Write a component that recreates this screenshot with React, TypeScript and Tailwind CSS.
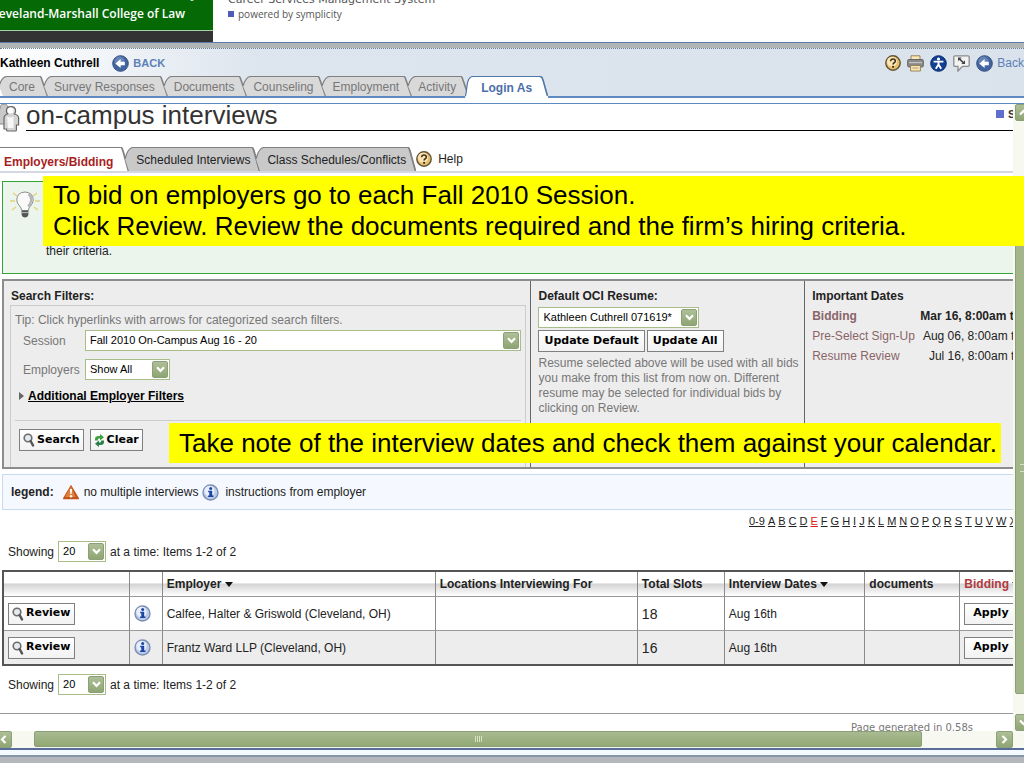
import { ReactNode } from "react";
import clsx from "clsx";

interface SelectBoxProps {
  id: string;
  label: string;
  value: string;
  className?: string;
}

const SelectBox = ({ id, label, value, className }: SelectBoxProps) => (
  <span className={clsx("relative block", className)}>
    <select
      id={id}
      aria-label={label}
      defaultValue={value}
      className="block h-[21px] w-full appearance-none border border-[#a9bd88] bg-white pl-1 pr-5 text-[11px] text-black"
    >
      <option>{value}</option>
    </select>
    <span className="pointer-events-none absolute top-0.5 right-0.5 grid h-[17px] w-4 place-items-center rounded-xs border border-[#8ba077] bg-linear-to-b from-[#aebf98] to-[#8fa573]">
      <svg width="9" height="7" viewBox="0 0 9 7">
        <path d="M1 1.2 4.5 4.8 8 1.2" fill="none" stroke="#fff" strokeWidth="2.2" />
      </svg>
    </span>
  </span>
);

const FormButton = ({ children, className }: { children: ReactNode; className?: string }) => (
  <button
    type="button"
    className={clsx(
      "inline-flex h-[22px] items-center gap-0.5 border border-[#808080] bg-linear-to-b from-white to-[#f2f2f2] font-['DejaVu_Sans',sans-serif] text-[11px] font-bold whitespace-nowrap text-black",
      className ?? "px-[3px]",
    )}
  >
    {children}
  </button>
);

const Magnifier = () => (
  <svg width="12" height="14" viewBox="0 0 12 14">
    <circle cx="5" cy="5" r="3.8" fill="#e3eaf0" stroke="#6d6d6d" strokeWidth="1.6" />
    <path d="M7.6 8 10 12.4" stroke="#555" strokeWidth="2.4" strokeLinecap="round" />
  </svg>
);

const Recycle = () => (
  <svg width="11" height="13" viewBox="0 0 11 13">
    <path d="M1 6.500V5Q1 2 4.500 2H6V0L10 3.200 6 6.400V4.600H4.800Q3.800 4.600 3.800 6.500z" fill="#3fa03f" />
    <path d="M10 6.500V8Q10 11 6.500 11H5v2L1 9.800 5 6.600v1.800h1.200Q7.200 8.400 7.200 6.500z" fill="#2b7f4a" />
  </svg>
);

const HelpIcon = () => (
  <svg width="16" height="16" viewBox="0 0 16 16">
    <circle cx="8" cy="8" r="7.2" fill="#e8bf6c" stroke="#5f5236" strokeWidth="1.4" />
    <circle cx="7" cy="6.8" r="5" fill="#fbe6b4" />
    <path d="M5.6 6.2Q5.8 4 8 4t2.3 1.9Q10.3 7.2 8.9 8q-.8.5-.8 1.6" fill="none" stroke="#3c321e" strokeWidth="1.6" />
    <circle cx="8.1" cy="11.8" r="1.1" fill="#3c321e" />
  </svg>
);

const InfoIcon = () => (
  <svg width="17" height="17" viewBox="0 0 17 17">
    <circle cx="8.5" cy="8.5" r="7.5" fill="#bccbe6" stroke="#7c8fb4" strokeWidth="1.4" />
    <circle cx="7.5" cy="7" r="5.2" fill="#e8effa" />
    <circle cx="8.7" cy="4.4" r="1.5" fill="#1c43a6" />
    <path d="M6.2 6.8h4v4.800h1.200v1.500H6.100v-1.500h1.200V8.200H6.200z" fill="#1c43a6" />
  </svg>
);

const BackIcon = () => (
  <svg width="17" height="17" viewBox="0 0 17 17">
    <circle cx="8.5" cy="8.5" r="7.8" fill="#43659f" stroke="#35507f" />
    <circle cx="7.5" cy="6.500" r="5" fill="#6484b8" />
    <path d="M3.4 8.5 8.6 4v2.8h4.2v3.4H8.6V13z" fill="#fff" />
  </svg>
);

const PrintIcon = () => (
  <svg width="17" height="17" viewBox="0 0 17 17">
    <path d="M4 .8h9V6H4z" fill="#fbe6b4" stroke="#8c7a50" strokeWidth=".9" />
    <rect x=".7" y="4.500" width="15.6" height="7.400" rx="1" fill="#8a8a8a" stroke="#666" />
    <path d="M2 7.6h13" stroke="#c4c4c4" strokeWidth="1.2" />
    <path d="M3.6 10.500h9.8V16H3.6z" fill="#fbe6b4" stroke="#8c7a50" strokeWidth=".9" />
    <path d="M5.4 13h6" stroke="#a79972" />
  </svg>
);

const AccessIcon = () => (
  <svg width="17" height="17" viewBox="0 0 17 17">
    <circle cx="8.5" cy="8.5" r="7.8" fill="#123e94" stroke="#0c2d70" />
    <circle cx="8.5" cy="4" r="1.6" fill="#fff" />
    <path d="M3.6 6.6h9.8M8.5 6.4v3.4M8.5 9.4 5.8 13.8M8.5 9.4l2.7 4.4" stroke="#fff" strokeWidth="1.9" />
  </svg>
);

const BubbleIcon = () => (
  <svg width="17" height="17" viewBox="0 0 17 17">
    <path d="M2 .8h13q1.200 0 1.200 1.200v8q0 1.400-1.200 1.400H9.500L5 16v-4.600H2Q.8 11.400.8 10V2Q.8.8 2 .8z" fill="#f2f2f2" stroke="#8b8b8b" strokeWidth="1.3" />
    <path d="M6 3.4 10.6 8" stroke="#444" strokeWidth="1.6" />
    <path d="M5 2.600h3.600L5 6.200zM12 8.900H8.400L12 5.300z" fill="#444" />
  </svg>
);

const WarningIcon = () => (
  <svg width="18" height="16" viewBox="0 0 18 16">
    <path d="M9 .8 17 14.2q.4 1-.8 1H1.8q-1.2 0-.8-1z" fill="#c4551a" />
    <path d="M9 2.5 13.6 13H3z" fill="#e3803d" />
    <path d="M7.800 5h2.400L9.600 10H8.400z" fill="#fff" />
    <circle cx="9" cy="12.2" r="1.2" fill="#fff" />
  </svg>
);

const PeopleIcon = () => (
  <svg width="20" height="28" viewBox="0 0 20 28">
    <path d="M-4 20V9Q-4 6 0 5 0 0 4 0t4 5q3 1 3 4v11z" fill="#c9c9c9" stroke="#888" />
    <path d="M4 25V14q0-3 3.600-4Q6.400 8.600 6.400 7 6.400 2.700 11 2.700T15.600 7q0 1.600-1.200 3 4.200 1 4.200 4v7h-2.200v5q0 1-1 1H7.600q-1 0-1-1v-1z" fill="#d4d4d4" stroke="#666" strokeWidth="1.2" />
    <circle cx="10.500" cy="6.500" r="3" fill="#fff" />
    <path d="M7 12.500q3.500 2 6.500 0V24H8z" fill="#fff" opacity=".8" />
  </svg>
);

const BulbIcon = () => (
  <svg width="32" height="30" viewBox="0 0 32 30">
    <path d="M4 3l4 3M28 3l-4 3M1 11h5M31 11h-5M3 20l4-3M29 20l-4-3" stroke="#e5d17c" strokeWidth="1.3" />
    <path d="M16 2Q7.800 2.500 7.800 10q0 3.400 2.800 6 1.800 1.800 2 4.500h6.800q.2-2.700 2-4.500 2.800-2.600 2.800-6 0-7.500-8.200-8z" fill="#fafafa" stroke="#8e8e8e" />
    <path d="M19.500 4q3.200 2.300 2.800 6.200-.4 3.200-3.200 6.300" fill="none" stroke="#b5b5b5" strokeWidth="2.4" />
    <path d="M12.600 20.500h6.800v4.500q-1 2.500-3.400 2.500t-3.400-2.500z" fill="#555" />
    <path d="M12.600 22.600h6.800" stroke="#bbb" />
  </svg>
);

interface TabProps {
  label: string;
  active?: boolean;
}

// Tabs of the outer record view
const RecordTab = ({ label, active }: TabProps) => {
  const fill = active ? "#ffffff" : "#d9d9d9";
  const stroke = active ? "#4d76aa" : "#808080";
  return (
    <div className={clsx("-ml-1 flex items-end", active && "relative -mb-0.5")}>
      <svg width="8" height={active ? 22 : 20} viewBox={active ? "0 0 8 22" : "0 0 8 20"} className="shrink-0">
        <path d={active ? "M0 22Q1.500 16 2 10 3 .5 8 .5V22z" : "M0 10Q3 .5 8 .5V20H4z"} fill={fill} />
        <path d={active ? "M.5 20Q1.500 15 2 10 3 .5 8 .5" : "M0 10Q3 .5 8 .5"} fill="none" stroke={stroke} strokeWidth="1.2" />
      </svg>
      <button
        type="button"
        className={clsx(
          "border-t whitespace-nowrap",
          active
            ? "h-[22px] border-[#4d76aa] bg-white px-2 text-xs font-bold text-[#4a70a8]"
            : "h-5 border-[#808080] bg-[#d9d9d9] pr-[5px] pl-0.5 text-xs text-[#777777]",
        )}
      >
        {label}
      </button>
      <svg width="8" height={active ? 22 : 20} viewBox={active ? "0 0 8 22" : "0 0 8 20"} className="shrink-0">
        <path d={active ? "M0 0Q2 0 3 3L8 20V22H0z" : "M0 0Q1 0 2 3L8 20H0z"} fill={fill} />
        <path d={active ? "M0 .5Q2 .5 3 4L7.500 20" : "M0 .5Q1 .5 2 4L7.500 20"} fill="none" stroke={stroke} strokeWidth="1.6" />
      </svg>
    </div>
  );
};

// Tabs of the embedded student page
const PageTab = ({ label, active }: TabProps) => {
  const fill = active ? "#ffffff" : "#c9c9c9";
  return (
    <div className={clsx("flex", !active && "-ml-1")}>
      {!active && (
        <svg width="8" height="24" viewBox="0 0 8 24" className="shrink-0">
          <path d="M0 12Q3 .5 8 .5V24H4z" fill={fill} />
          <path d="M0 12Q3 .5 8 .5" fill="none" stroke="#808080" strokeWidth="1.2" />
        </svg>
      )}
      <button
        type="button"
        className={clsx(
          "h-6 border-t border-[#808080] text-xs whitespace-nowrap",
          active ? "bg-white pt-1 pr-2 pl-1 font-bold text-[#a81e22]" : "bg-[#c9c9c9] pr-0.5 pl-[3px] text-[#222222]",
        )}
      >
        {label}
      </button>
      <svg width="8" height="24" viewBox="0 0 8 24" className="shrink-0">
        <path d="M0 0Q1 0 2 3L8 24H0z" fill={fill} />
        <path d="M0 .5Q1 .5 2 4L7.500 24" fill="none" stroke="#808080" strokeWidth="1.8" />
      </svg>
    </div>
  );
};

const Showing = ({ id }: { id: string }) => (
  <div className="flex items-center gap-1 pl-2 text-xs text-[#222222]">
    <label htmlFor={id}>Showing</label>
    <SelectBox id={id} label="Items per page" value="20" className="w-12" />
    <span>at a time: Items 1-2 of 2</span>
  </div>
);

const ScrollButton = ({ path, label }: { path: string; label: string }) => (
  <button
    type="button"
    aria-label={label}
    className="grid size-[17px] shrink-0 place-items-center rounded-xs border border-[#8ba077] bg-linear-to-b from-[#aebf98] to-[#8fa573]"
  >
    <svg width="9" height="9" viewBox="0 0 9 9">
      <path d={path} fill="none" stroke="#fff" strokeWidth="2.2" />
    </svg>
  </button>
);

const recordTabs = ["Core", "Survey Responses", "Documents", "Counseling", "Employment", "Activity"];

const letters = ["0-9", ..."ABCDEFGHIJKLMNOPQRSTUVWX"];

const dates = [
  { name: "Bidding", range: "Mar 16, 8:00am to", bold: true },
  { name: "Pre-Select Sign-Up", range: "Aug 06, 8:00am to", bold: false },
  { name: "Resume Review", range: "Jul 16, 8:00am to", bold: false },
];

const employers = [
  { name: "Calfee, Halter & Griswold (Cleveland, OH)", slots: 18, date: "Aug 16th" },
  { name: "Frantz Ward LLP (Cleveland, OH)", slots: 16, date: "Aug 16th" },
];

const headCell = "border-l border-[#8a8a8a] pl-1 text-left whitespace-nowrap overflow-hidden";
const bodyCell = "border-l border-[#8a8a8a] pl-1 overflow-hidden whitespace-nowrap";

const Header = () => (
  <header className="flex h-[42px] overflow-hidden bg-white">
    <div className="w-[213px] shrink-0 bg-[#333333]">
      <div className="flex h-[31px] flex-col items-end justify-end overflow-hidden border-b border-[#a5cfa5] bg-[#056a05] pr-4 font-['Open_Sans',sans-serif]">
        <span className="mb-1 text-xs leading-4 font-bold whitespace-nowrap text-[#c8e0c8]">Cleveland State University</span>
        <span className="pr-3 pb-2 text-xs leading-4 font-semibold whitespace-nowrap text-white">
          Cleveland-Marshall College of Law
        </span>
      </div>
    </div>
    <div className="-mt-2 flex flex-col pl-[15px] text-[#555555]">
      <span className="font-['DejaVu_Sans',sans-serif] text-[11px] leading-4 whitespace-nowrap">Career Services Management System</span>
      <span className="flex items-center gap-1 font-['Open_Sans',sans-serif] text-[10px] leading-3">
        <i className="size-1.5 bg-[#4c5cb8]" />
        powered by symplicity
      </span>
    </div>
  </header>
);

const RecordBar = () => (
  <div className="border-t border-[#5a7ba6]">
    <div className="h-[5px] bg-[#b0b5b5]" />
    <div className="border-t border-dotted border-[#6d7f99] bg-linear-to-r from-white via-[#dde5ee] via-25% to-[#dae2eb]">
      <div className="flex h-7 items-center justify-between">
        <div className="flex items-center gap-[13px]">
          <h2 className="text-xs font-bold text-black">Kathleen Cuthrell</h2>
          <a href="#back" className="flex items-center gap-1 text-[11px] font-bold text-[#5b80b5]">
            <BackIcon />
            BACK
          </a>
        </div>
        <div className="flex items-center gap-1.5 text-xs text-[#5b80b5]">
          <a href="#help" aria-label="Help"><HelpIcon /></a>
          <a href="#print" aria-label="Print"><PrintIcon /></a>
          <a href="#access" aria-label="Accessibility"><AccessIcon /></a>
          <a href="#popout" aria-label="Pop out"><BubbleIcon /></a>
          <a href="#back" className="flex items-center gap-1">
            <BackIcon />
            Back
          </a>
        </div>
      </div>
      <nav className="flex h-[21px] items-end border-b-2 border-[#5f8abf] pl-[3px]">
        {recordTabs.map((tab) => (
          <RecordTab key={tab} label={tab} />
        ))}
        <RecordTab label="Login As" active />
      </nav>
    </div>
  </div>
);

const SearchFilters = () => (
  <section className="min-w-0 pt-[7px] pr-1 pl-1.5">
    <h3 className="pl-px text-xs leading-4 font-bold text-[#222222]">Search Filters:</h3>
    <div className="mt-px border border-b-0 border-[#cccccc] pt-2 pr-1 pl-1 text-xs text-[#777777]">
      <p className="leading-3 whitespace-nowrap">Tip: Click hyperlinks with arrows for categorized search filters.</p>
      <div className="mt-1 flex items-center pl-2">
        <label htmlFor="session" className="w-[62px]">Session</label>
        <SelectBox id="session" label="Session" value="Fall 2010 On-Campus Aug 16 - 20" className="flex-1" />
      </div>
      <div className="mt-2 flex items-center pl-2">
        <label htmlFor="employers" className="w-[62px]">Employers</label>
        <SelectBox id="employers" label="Employers" value="Show All" className="w-[85px]" />
      </div>
      <a href="#filters" className="mt-2 flex items-center gap-1 pl-1 text-xs leading-4 font-bold text-black underline">
        <svg width="5" height="8" viewBox="0 0 5 8">
          <path d="M0 0 5 4 0 8z" fill="#666" />
        </svg>
        Additional Employer Filters
      </a>
      <div className="mt-4 flex gap-1.5 border-t border-[#cccccc] pt-2 pb-4 pl-1">
        <FormButton>
          <Magnifier />
          Search
        </FormButton>
        <FormButton>
          <Recycle />
          Clear
        </FormButton>
      </div>
    </div>
  </section>
);

const DefaultResume = () => (
  <section className="min-w-0 border-l border-[#666666] px-[7px] pt-[7px]">
    <h3 className="text-xs leading-4 font-bold text-[#222222]">Default OCI Resume:</h3>
    <SelectBox id="resume" label="Default OCI Resume" value="Kathleen Cuthrell 071619*" className="mt-[3px] w-[161px]" />
    <div className="mt-0.5 flex gap-0.5">
      <FormButton className="px-[5px]">Update Default</FormButton>
      <FormButton className="px-[5px]">Update All</FormButton>
    </div>
    <p className="mt-1 text-xs leading-[15px] whitespace-nowrap text-[#777777]">
      Resume selected above will be used with all bids
      <br />
      you make from this list from now on. Different
      <br />
      resume may be selected for individual bids by
      <br />
      clicking on Review.
    </p>
  </section>
);

const ImportantDates = () => (
  <section className="min-w-0 overflow-hidden border-l border-[#666666] pt-[7px] pl-[7px]">
    <h3 className="text-xs leading-4 font-bold text-[#222222]">Important Dates</h3>
    <dl className="mr-[-8px] pt-0.5">
      {dates.map(({ name, range, bold }) => (
        <div key={name} className="flex justify-between text-xs leading-5 whitespace-nowrap">
          <dt className={clsx("text-[#8b6468]", bold && "font-bold")}>{name}</dt>
          <dd className={clsx("text-[#222222]", bold && "font-bold")}>{range}</dd>
        </div>
      ))}
    </dl>
  </section>
);

const SortArrow = () => (
  <svg width="8" height="5" viewBox="0 0 8 5" className="inline align-middle">
    <path d="M0 0h8L4 5z" fill="#111" />
  </svg>
);

const EmployerTable = () => (
  <table className="ml-0.5 w-full table-fixed border-separate border-spacing-0 border-2 border-r-0 border-[#555555] text-xs text-[#222222]">
    <colgroup>
      <col className="w-[12.400%]" />
      <col className="w-[3.200%]" />
      <col className="w-[27%]" />
      <col className="w-[20%]" />
      <col className="w-[8.600%]" />
      <col className="w-[13.900%]" />
      <col className="w-[9.400%]" />
      <col />
    </colgroup>
    <thead>
      <tr className="h-6 bg-linear-to-b from-white from-45% via-[#d4d4d4] via-50% to-white">
        <th aria-label="Review" />
        <th aria-label="Instructions" className={headCell} />
        <th className={headCell}>Employer <SortArrow /></th>
        <th className={headCell}>Locations Interviewing For</th>
        <th className={headCell}>Total Slots</th>
        <th className={headCell}>Interview Dates <SortArrow /></th>
        <th className={headCell}>documents</th>
        <th className={clsx(headCell, "text-[#b03a3e]")}>Bidding <SortArrow /></th>
      </tr>
    </thead>
    <tbody>
      {employers.map(({ name, slots, date }) => (
        <tr key={name} className="h-[34px] even:bg-[#ededed] [&>td]:border-t [&>td]:border-t-[#999999]">
          <td className="pl-1">
            <FormButton>
              <Magnifier />
              Review
            </FormButton>
          </td>
          <td className={bodyCell}><InfoIcon /></td>
          <td className={bodyCell}>{name}</td>
          <td className={bodyCell} />
          <td className={clsx(bodyCell, "text-sm")}>{slots}</td>
          <td className={bodyCell}>{date}</td>
          <td className={bodyCell} />
          <td className={bodyCell}>
            <FormButton className="px-2">Apply</FormButton>
          </td>
        </tr>
      ))}
    </tbody>
  </table>
);

const StudentPage = () => (
  <main className="min-w-0 flex-1 overflow-hidden bg-white">
    <div className="flex h-[27px] gap-1.5">
      <PeopleIcon />
      <div className="flex flex-1 justify-between overflow-hidden border-b border-black">
        <h1 className="text-[26px] leading-[22px] whitespace-nowrap text-[#333333]">on-campus interviews</h1>
        <span className="mr-[-50px] flex items-center gap-1 pb-1.5 text-[11px] font-bold text-[#333333]">
          <i className="size-2 bg-[#5f70cc]" />
          Symplicity
        </span>
      </div>
    </div>

    <nav className="mt-4 flex border-b-2 border-[#d5d8e2]">
      <PageTab label="Employers/Bidding" active />
      <PageTab label="Scheduled Interviews" />
      <PageTab label="Class Schedules/Conflicts" />
      <a href="#help" className="flex items-center gap-1.5 text-xs text-[#222222]">
        <HelpIcon />
        Help
      </a>
    </nav>

    <div className="mt-2 ml-0.5 flex h-[93px] gap-[5px] border border-r-0 border-[#36a336] bg-[#ecf5ec] pt-2 pl-1.5 text-[#222222]">
      <BulbIcon />
      <p className="self-end pb-3.5 text-xs leading-4">their criteria.</p>
    </div>

    <div className="mt-[5px] ml-0.5 grid grid-cols-[527fr_274fr_209fr] border-2 border-r-0 border-[#8c8c8c] bg-[#ededed]">
      <SearchFilters />
      <DefaultResume />
      <ImportantDates />
    </div>

    <div className="mt-[5px] ml-0.5 flex h-9 items-center border border-r-0 border-[#c9d9ee] bg-[#f5f9ff] pl-2 text-xs text-[#222222]">
      <b className="mr-2">legend:</b>
      <WarningIcon />
      <span className="mx-1">no multiple interviews</span>
      <InfoIcon />
      <span className="ml-1.5">instructions from employer</span>
    </div>

    <nav className="mt-[3px] ml-auto flex w-[264px] gap-[3px] overflow-hidden text-[11px] leading-4">
      {letters.map((letter) => (
        <a
          key={letter}
          href={`#${letter}`}
          className={clsx("shrink-0 underline", letter === "E" ? "text-[#e02020]" : "text-[#222222]")}
        >
          {letter}
        </a>
      ))}
    </nav>

    <div className="pt-3 pb-2">
      <Showing id="top-count" />
    </div>
    <EmployerTable />
    <div className="pt-2 pb-[18px]">
      <Showing id="bottom-count" />
    </div>
    <footer className="h-[18px] overflow-hidden border-t border-[#999999] pt-1.5 pr-10 text-right font-['DejaVu_Sans',sans-serif] text-[10px] leading-4 text-[#777777]">
      Page generated in 0.58s
    </footer>
  </main>
);

const VerticalScroll = () => (
  <div className="flex w-[11px] shrink-0 overflow-hidden bg-[#f7f8f0] pl-0.5">
    <div className="flex flex-col">
      <ScrollButton label="Scroll up" path="M1 6.500 4.500 3 8 6.500" />
      <div className="h-[120px]" />
      <div className="grid w-[17px] flex-1 place-items-center rounded-xs border border-[#8ba077] bg-[#a3b58b]">
        <i className="h-2 w-2 border-y border-[#d5e0c4]" />
      </div>
      <div className="h-5" />
      <ScrollButton label="Scroll down" path="M1 2.500 4.500 6 8 2.500" />
    </div>
  </div>
);

const HorizontalScroll = () => (
  <div className="flex h-[17px] overflow-hidden bg-[#f7f8f0] pr-[11px]">
    <div className="-ml-[5px] flex flex-1">
      <ScrollButton label="Scroll left" path="M6.500 1 3 4.500 6.500 8" />
      <div className="w-[22px]" />
      <div className="flex h-4 flex-1 items-center justify-center gap-px rounded-xs border border-[#8ba077] bg-linear-to-b from-[#a9ba92] to-[#91a873]">
        {[0, 1, 2, 3].map((line) => (
          <i key={line} className="h-1.5 w-px bg-[#d5e0c4]" />
        ))}
      </div>
      <div className="w-[74px]" />
      <ScrollButton label="Scroll right" path="M2.500 1 6 4.500 2.500 8" />
    </div>
  </div>
);

const App = () => {
  return (
    <div className="overflow-hidden bg-white font-['Liberation_Sans',Arial,sans-serif]">
      <Header />
      <RecordBar />
      <div className="relative mt-[5px] border-t border-[#5f8abf]">
        <div className="flex">
          <StudentPage />
          <VerticalScroll />
        </div>
        <HorizontalScroll />

        {/* Slide callouts laid over the page */}
        <p className="absolute top-[72px] right-0 left-[43px] bg-[#ffff00] px-2.5 py-1 text-[26px] leading-[31px] whitespace-nowrap text-black">
          To bid on employers go to each Fall 2010 Session.
          <br />
          Click Review. Review the documents required and the firm’s hiring criteria.
        </p>
        <p className="absolute top-[319px] left-[169px] bg-[#ffff00] py-1 pr-1 pl-2.5 text-[26px] leading-8 whitespace-nowrap text-black">
          Take note of the interview dates and check them against your calendar.
        </p>
      </div>
      <div className="h-[7px] border-t-2 border-[#5a6c9c] bg-[#f4fbff]" />
      <div className="h-2 border-t-2 border-[#8496a8] bg-[#b4b8bc]" />
    </div>
  );
};

export default App;
